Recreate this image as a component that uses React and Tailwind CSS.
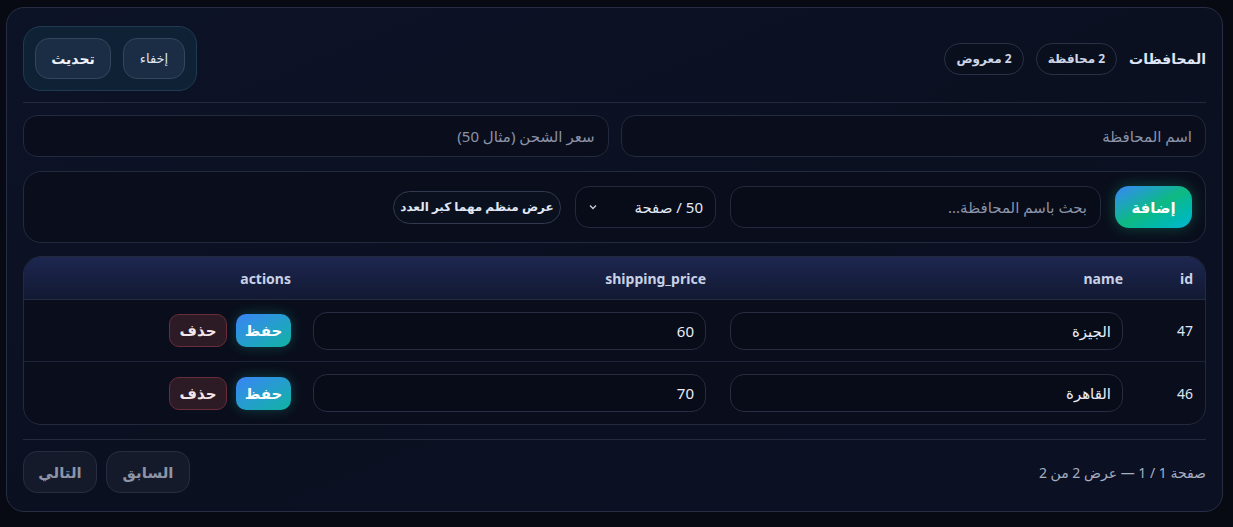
import React from "react";

const rows = [
  { id: 47, name: "الجيزة", price: "60" },
  { id: 46, name: "القاهرة", price: "70" },
];

export default function App() {
  return (
    <div
      dir="rtl"
      className="min-h-screen w-full bg-[#070a13] pl-[6px] pr-[10px] pt-[7px] pb-[16px]"
      style={{ fontFamily: '"Noto Sans", "DejaVu Sans", sans-serif' }}
    >
      <div className="rounded-[18px] border border-[#272e44] bg-gradient-to-br from-[#0d1327] via-[#0b1021] to-[#0b1023] px-[16px] pt-[18px] pb-[18px]">
        {/* Header */}
        <div className="flex items-center justify-between">
          <div className="flex items-center gap-3">
            <h1 className="text-[14px] font-bold text-[#dfe6f7]">المحافظات</h1>
            <span className="flex h-[32px] items-center rounded-full border border-[#2a3146] bg-[#0a0f1e] px-[11px] text-[12px] font-bold text-[#cdd5e8]">
              2 محافظة
            </span>
            <span className="flex h-[32px] items-center rounded-full border border-[#2a3146] bg-[#0a0f1e] px-[11px] text-[12px] font-bold text-[#cdd5e8]">
              2 معروض
            </span>
          </div>
          <div className="flex items-center gap-3 rounded-[18px] border border-[#1f3a52] bg-[#0f2135] p-[11px]">
            <button className="flex h-[41px] w-[62px] items-center justify-center rounded-[14px] border border-[#34455e] bg-[#1a2d44] text-[13px] text-[#dbe4f5]">
              إخفاء
            </button>
            <button className="flex h-[41px] w-[76px] items-center justify-center rounded-[14px] border border-[#34455e] bg-[#1a2d44] text-[14px] font-bold text-[#eef2fb]">
              تحديث
            </button>
          </div>
        </div>

        <div className="mt-[11px] border-t border-[#232a3e]" />

        {/* Inputs */}
        <div className="mt-[12px] grid grid-cols-2 gap-3">
          <input
            placeholder="اسم المحافظة"
            className="h-[42px] rounded-[14px] border border-[#232a3d] bg-[#0a0e1c] px-[13px] text-[15px] text-[#dbe3f5] outline-none placeholder:text-[#8b93a8]"
          />
          <input
            placeholder="سعر الشحن (مثال 50)"
            className="h-[42px] rounded-[14px] border border-[#232a3d] bg-[#0a0e1c] px-[13px] text-[15px] text-[#dbe3f5] outline-none placeholder:text-[#8b93a8]"
          />
        </div>

        {/* Toolbar */}
        <div className="mt-[14px] flex items-center gap-[14px] rounded-[18px] border border-[#232a3d] bg-[#0a0e1c] px-[13px] py-[14px]">
          <button className="flex h-[42px] w-[77px] items-center justify-center rounded-[14px] bg-gradient-to-br from-[#3b82f6] via-[#10b981] to-[#06b6d4] text-[15px] font-bold text-white shadow-[0_0_14px_rgba(16,185,129,0.35)]">
            إضافة
          </button>
          <input
            placeholder="بحث باسم المحافظة..."
            className="h-[42px] w-[371px] rounded-[14px] border border-[#232a3d] bg-[#080c18] px-[13px] text-[15px] text-[#dbe3f5] outline-none placeholder:text-[#8b93a8]"
          />
          <div className="flex h-[42px] w-[141px] items-center justify-between rounded-[14px] border border-[#232a3d] bg-[#080c18] px-[12px] text-[15px] text-[#e3e9f7]">
            <span>50 / صفحة</span>
            <svg width="10" height="10" viewBox="0 0 10 10" fill="none" stroke="#c8cfde" strokeWidth="1.3">
              <path d="M2 3.5 L5 6.5 L8 3.5" />
            </svg>
          </div>
          <button className="flex h-[33px] w-[168px] items-center justify-center rounded-full border border-[#323a50] bg-[#0b101f] text-[12px] font-bold text-[#dfe6f5]">
            عرض منظم مهما كبر العدد
          </button>
        </div>

        {/* Table */}
        <div className="mt-[13px] overflow-hidden rounded-[18px] border border-[#232a3d] bg-[#0a0e1c]">
          <div className="grid h-[43px] grid-cols-[70px_1fr_1fr_277px] items-center border-b border-[#242b40] bg-gradient-to-b from-[#1d2750] to-[#121933] text-[14px] font-bold text-[#c9d1e6]">
            <div className="px-[12px]">id</div>
            <div className="px-[12px]">name</div>
            <div className="px-[12px]">shipping_price</div>
            <div className="px-[10px]">actions</div>
          </div>
          {rows.map((r, i) => (
            <div
              key={r.id}
              className={`grid h-[62px] grid-cols-[70px_1fr_1fr_277px] items-center ${i === 0 ? "border-b border-[#1c2336]" : ""}`}
            >
              <div className="px-[12px] text-[14px] text-[#dfe5f3]">{r.id}</div>
              <div className="px-[12px]">
                <input
                  defaultValue={r.name}
                  className="h-[38px] w-full rounded-[14px] border border-[#262d40] bg-[#080c18] px-[11px] text-[15px] text-[#e8edf8] outline-none"
                />
              </div>
              <div className="px-[12px]">
                <input
                  defaultValue={r.price}
                  className="h-[38px] w-full rounded-[14px] border border-[#262d40] bg-[#080c18] px-[11px] text-[15px] text-[#e8edf8] outline-none"
                />
              </div>
              <div className="flex items-center gap-[9px] px-[10px]">
                <button className="flex h-[33px] w-[55px] items-center justify-center rounded-[10px] bg-gradient-to-br from-[#3b82f6] to-[#10b3a0] text-[15px] font-bold text-white shadow-[0_0_12px_rgba(20,184,166,0.3)]">
                  حفظ
                </button>
                <button className="flex h-[33px] w-[58px] items-center justify-center rounded-[10px] border border-[#6a2d3a] bg-[#2c1a24] text-[15px] font-bold text-[#f3e6ea]">
                  حذف
                </button>
              </div>
            </div>
          ))}
        </div>

        <div className="mt-[14px] border-t border-[#232a3e]" />

        {/* Footer */}
        <div className="mt-[11px] flex items-center justify-between">
          <div className="text-[14px] text-[#a6aec2]">صفحة 1 / 1 — عرض 2 من 2</div>
          <div className="flex items-center gap-[9px]">
            <button className="flex h-[42px] w-[84px] items-center justify-center rounded-[14px] border border-[#262d40] bg-[#151a2b] text-[15px] font-bold text-[#8d94a7]">
              السابق
            </button>
            <button className="flex h-[42px] w-[74px] items-center justify-center rounded-[14px] border border-[#262d40] bg-[#151a2b] text-[15px] font-bold text-[#8d94a7]">
              التالي
            </button>
          </div>
        </div>
      </div>
    </div>
  );
}
